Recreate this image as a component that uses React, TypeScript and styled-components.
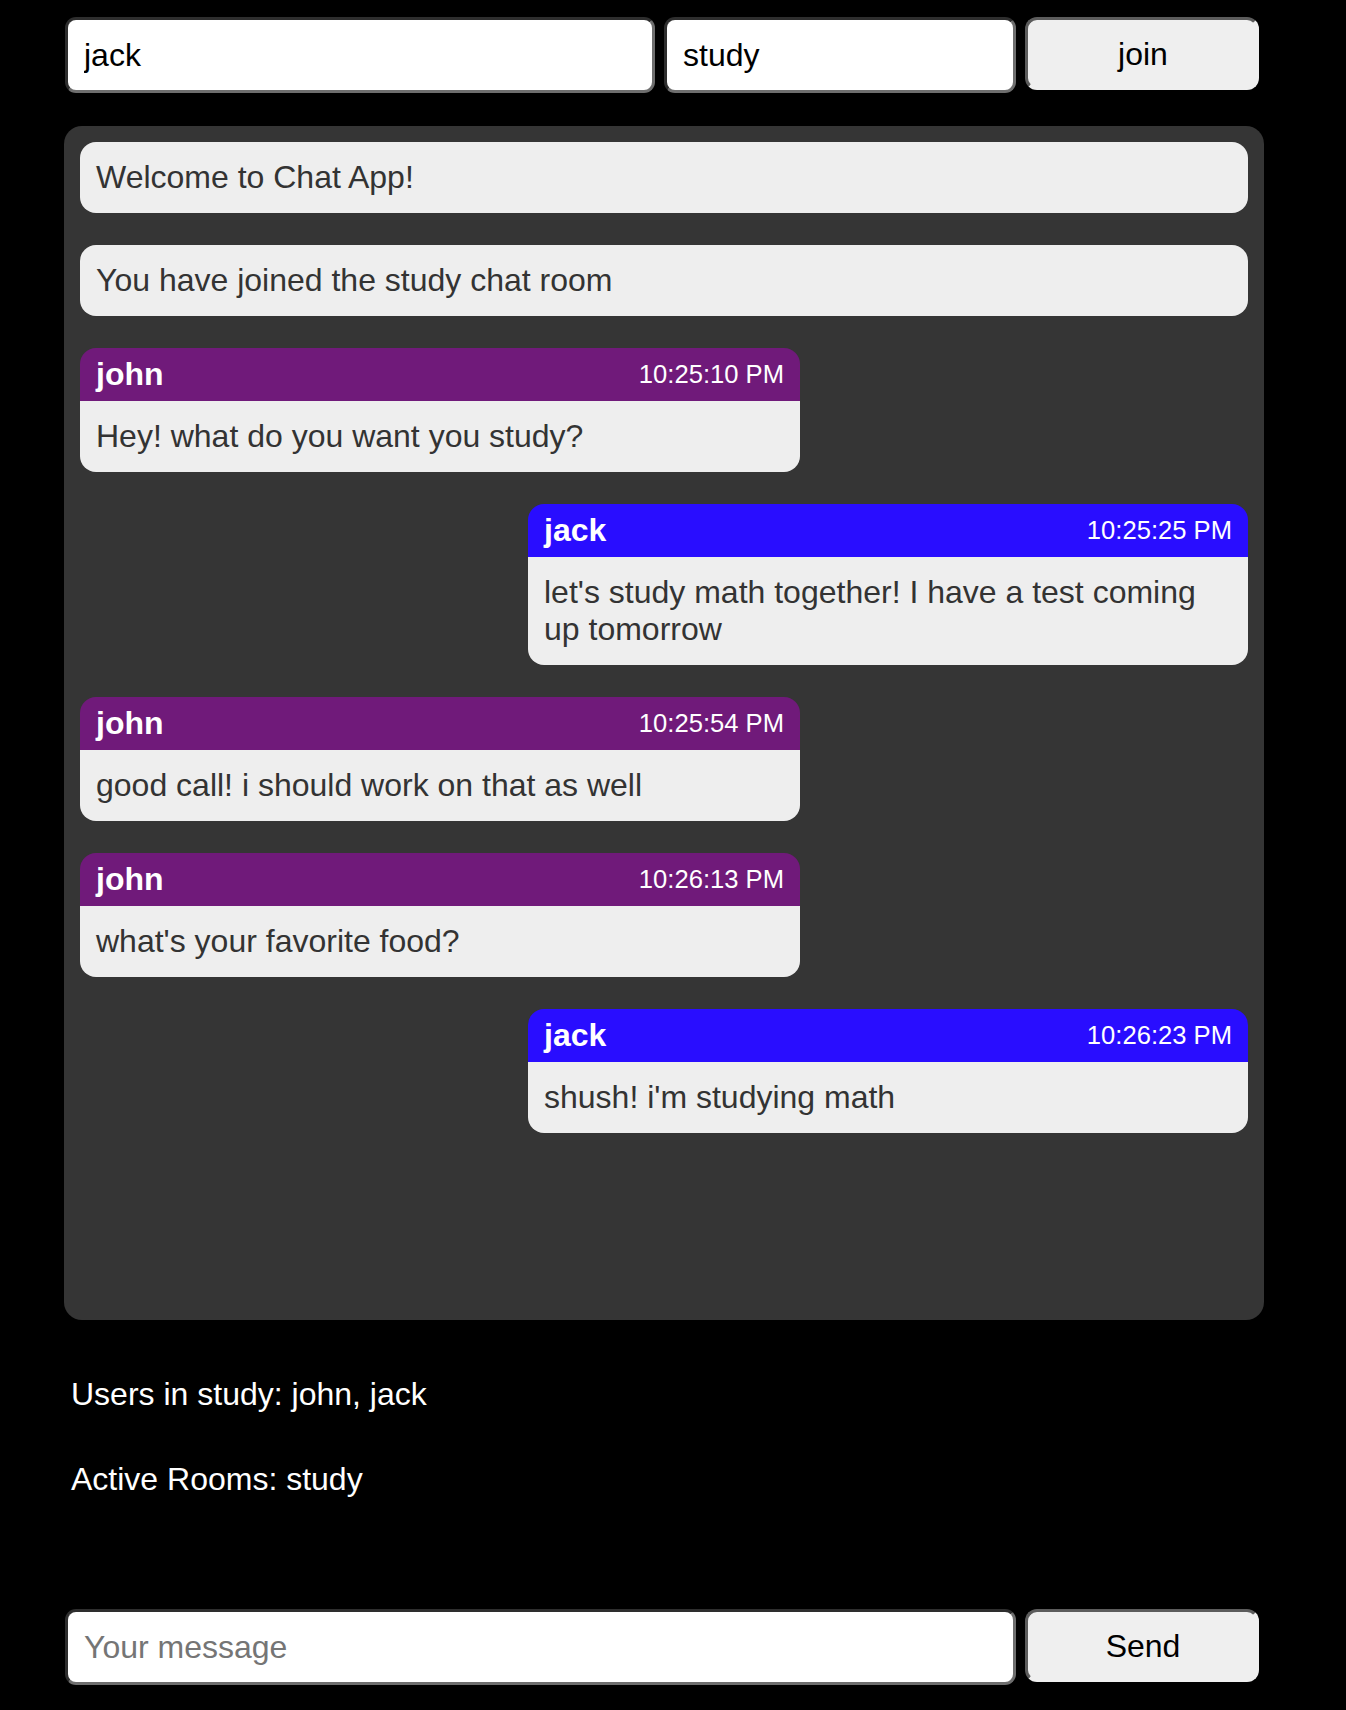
import styled, { createGlobalStyle } from "styled-components";

const GlobalStyle = createGlobalStyle`
  body {
    margin: 0;
    background: #000;
    font-family: "Liberation Sans", Arial, sans-serif;
    font-size: 32px;
  }
  * {
    box-sizing: border-box;
  }
`;

const Page = styled.div`
  padding: 17px 0 28px 64px;
`;
const Column = styled.div`
  width: 1200px;
  display: flex;
  flex-direction: column;
`;
const FormRow = styled.form<{ top?: number }>`
  display: flex;
  align-items: flex-start;
  gap: 9px;
  padding-left: 1px;
  margin: ${(props) => props.top || 0}px 0 0 0;
`;
const TextInput = styled.input<{ w: number }>`
  width: ${(props) => props.w}px;
  height: 76px;
  padding: 0 16px;
  border: 3px solid;
  border-color: #2e2e2e #6e6e6e #6e6e6e #2e2e2e;
  border-radius: 11px;
  background: #fff;
  color: #000;
  font-family: inherit;
  font-size: 32px;
  outline: none;
  &::placeholder {
    color: #757575;
  }
`;
const Button = styled.button`
  width: 234px;
  height: 73px;
  padding: 2px 0 0 2px;
  border: 3px solid;
  border-color: #5c5c5c #efefef #efefef #5c5c5c;
  border-radius: 12px;
  background: #efefef;
  color: #000;
  font-family: inherit;
  font-size: 32px;
  cursor: pointer;
`;
const Panel = styled.div`
  margin-top: 33px;
  height: 1194px;
  background: #353535;
  border-radius: 18px;
  padding: 16px;
  display: flex;
  flex-direction: column;
  gap: 32px;
`;
const SystemMsg = styled.div`
  background: #eee;
  color: #333;
  border-radius: 16px;
  padding: 17px 16px;
  line-height: 37px;
`;
const Bubble = styled.div<{ mine: boolean }>`
  width: 720px;
  align-self: ${(props) => (props.mine ? "flex-end" : "flex-start")};
  border-radius: 16px;
  overflow: hidden;
`;
const BubbleHeader = styled.div<{ mine: boolean }>`
  display: flex;
  align-items: center;
  justify-content: space-between;
  padding: 8px 16px;
  background: ${(props) => (props.mine ? "#290dff" : "#701a7a")};
  color: #fff;
  line-height: 37px;
`;
const Name = styled.span`
  font-weight: bold;
`;
const Time = styled.span`
  font-size: 0.8em;
`;
const BubbleBody = styled.div`
  background: #eee;
  color: #333;
  padding: 17px 16px;
  line-height: 37px;
`;
const Info = styled.div`
  margin-top: 56px;
  padding-left: 7px;
  display: flex;
  flex-direction: column;
  gap: 48px;
  color: #fff;
  p {
    margin: 0;
    line-height: 37px;
  }
`;

const messages = [
  { user: "john", time: "10:25:10 PM", text: "Hey! what do you want you study?" },
  {
    user: "jack",
    time: "10:25:25 PM",
    text: "let's study math together! I have a test coming up tomorrow",
  },
  { user: "john", time: "10:25:54 PM", text: "good call! i should work on that as well" },
  { user: "john", time: "10:26:13 PM", text: "what's your favorite food?" },
  { user: "jack", time: "10:26:23 PM", text: "shush! i'm studying math" },
];

function App() {
  const me = "jack";
  return (
    <>
      <GlobalStyle />
      <Page>
        <Column>
          <FormRow onSubmit={(e) => e.preventDefault()}>
            <TextInput w={590} defaultValue="jack" />
            <TextInput w={352} defaultValue="study" />
            <Button type="submit">join</Button>
          </FormRow>
          <Panel>
            <SystemMsg>Welcome to Chat App!</SystemMsg>
            <SystemMsg>You have joined the study chat room</SystemMsg>
            {messages.map((m, i) => (
              <Bubble key={i} mine={m.user === me}>
                <BubbleHeader mine={m.user === me}>
                  <Name>{m.user}</Name>
                  <Time>{m.time}</Time>
                </BubbleHeader>
                <BubbleBody>{m.text}</BubbleBody>
              </Bubble>
            ))}
          </Panel>
          <Info>
            <p>Users in study: john, jack</p>
            <p>Active Rooms: study</p>
          </Info>
          <FormRow top={111} onSubmit={(e) => e.preventDefault()}>
            <TextInput w={951} placeholder="Your message" />
            <Button type="submit">Send</Button>
          </FormRow>
        </Column>
      </Page>
    </>
  );
}

export default App;
